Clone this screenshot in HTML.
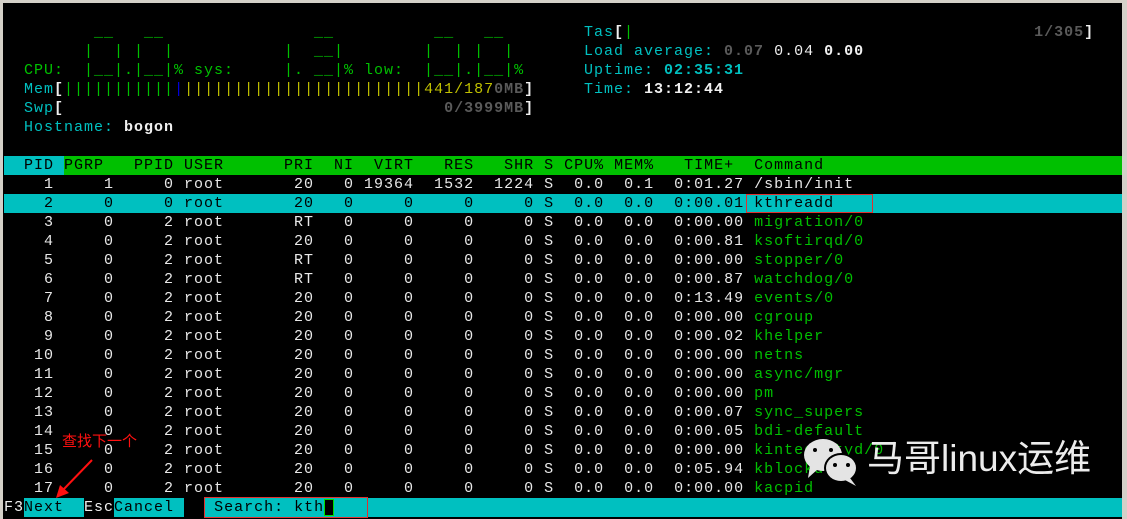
<!DOCTYPE html>
<html><head><meta charset="utf-8">
<style>
html,body{margin:0;padding:0;}
body{width:1127px;height:519px;background:#d4d0c8;position:relative;overflow:hidden;}
#term{position:absolute;left:3px;top:3px;width:1119px;height:516px;background:#000;}
.l{position:absolute;left:4px;height:19px;line-height:19px;white-space:pre;font-family:"Liberation Mono",monospace;font-size:15px;letter-spacing:1px;color:#e8e8e8;}
.g{color:#00c000}.c{color:#00c0c0}.w{color:#f0f0f0}.b{font-weight:bold}.gr{color:#5a5a5a;font-weight:bold}
.y{color:#c0c000}.bl{color:#0000e0}.k{color:#000}
.bar{position:absolute;height:19px;}
</style></head><body>
<div id="term"></div>
<div class="l g" style="top:23px">         __   __               __          __   __</div>
<div class="l g" style="top:42px">        |  | |  |           |  __|        |  | |  |</div>
<div class="l g" style="top:61px">  CPU:  |__|.|__|% sys:     |. __|% low:  |__|.|__|%</div>
<div class="l" style="top:80px">  <span class="c">Mem</span><span class="w b">[</span><span class="g">|||||||||||</span><span class="bl">|</span><span class="y">||||||||||||||||||||||||441/187</span><span class="gr">0MB</span><span class="w b">]</span></div>
<div class="l" style="top:99px">  <span class="c">Swp</span><span class="w b">[</span>                                      <span class="gr">0/3999MB</span><span class="w b">]</span></div>
<div class="l" style="top:118px">  <span class="c">Hostname:</span> <span class="w b">bogon</span></div>
<div class="l" style="top:23px;left:584px"><span class="c">Tas</span><span class="w b">[</span><span class="g">|</span>                                        <span class="gr">1/305</span><span class="w b">]</span></div>
<div class="l" style="top:42px;left:584px"><span class="c">Load average: </span><span class="gr">0.07</span> <span class="w">0.04</span> <span class="w b">0.00</span></div>
<div class="l" style="top:61px;left:584px"><span class="c">Uptime: </span><span class="c b">02:35:31</span></div>
<div class="l" style="top:80px;left:584px"><span class="c">Time: </span><span class="w b">13:12:44</span></div>
<div class="bar" style="top:156px;left:4px;width:1118px;background:#00c000"></div>
<div class="bar" style="top:156px;left:4px;width:60px;background:#00c0c0"></div>
<div class="l k" style="top:156px">  PID PGRP   PPID USER      PRI  NI  VIRT   RES   SHR S CPU% MEM%   TIME+  Command</div>
<div class="l" style="top:175px">    1     1     0 root       20   0 19364  1532  1224 S  0.0  0.1  0:01.27 /sbin/init</div>
<div class="bar" style="top:194px;left:4px;width:1118px;background:#00c0c0"></div>
<div class="l k" style="top:194px">    2     0     0 root       20   0     0     0     0 S  0.0  0.0  0:00.01 kthreadd</div>
<div style="position:absolute;left:746px;top:194px;width:125px;height:17px;border:1px solid #e03030"></div>
<div class="l" style="top:213px">    3     0     2 root       RT   0     0     0     0 S  0.0  0.0  0:00.00 <span class="g">migration/0</span></div>
<div class="l" style="top:232px">    4     0     2 root       20   0     0     0     0 S  0.0  0.0  0:00.81 <span class="g">ksoftirqd/0</span></div>
<div class="l" style="top:251px">    5     0     2 root       RT   0     0     0     0 S  0.0  0.0  0:00.00 <span class="g">stopper/0</span></div>
<div class="l" style="top:270px">    6     0     2 root       RT   0     0     0     0 S  0.0  0.0  0:00.87 <span class="g">watchdog/0</span></div>
<div class="l" style="top:289px">    7     0     2 root       20   0     0     0     0 S  0.0  0.0  0:13.49 <span class="g">events/0</span></div>
<div class="l" style="top:308px">    8     0     2 root       20   0     0     0     0 S  0.0  0.0  0:00.00 <span class="g">cgroup</span></div>
<div class="l" style="top:327px">    9     0     2 root       20   0     0     0     0 S  0.0  0.0  0:00.02 <span class="g">khelper</span></div>
<div class="l" style="top:346px">   10     0     2 root       20   0     0     0     0 S  0.0  0.0  0:00.00 <span class="g">netns</span></div>
<div class="l" style="top:365px">   11     0     2 root       20   0     0     0     0 S  0.0  0.0  0:00.00 <span class="g">async/mgr</span></div>
<div class="l" style="top:384px">   12     0     2 root       20   0     0     0     0 S  0.0  0.0  0:00.00 <span class="g">pm</span></div>
<div class="l" style="top:403px">   13     0     2 root       20   0     0     0     0 S  0.0  0.0  0:00.07 <span class="g">sync_supers</span></div>
<div class="l" style="top:422px">   14     0     2 root       20   0     0     0     0 S  0.0  0.0  0:00.05 <span class="g">bdi-default</span></div>
<div class="l" style="top:441px">   15     0     2 root       20   0     0     0     0 S  0.0  0.0  0:00.00 <span class="g">kintegrityd/0</span></div>
<div class="l" style="top:460px">   16     0     2 root       20   0     0     0     0 S  0.0  0.0  0:05.94 <span class="g">kblockd/0</span></div>
<div class="l" style="top:479px">   17     0     2 root       20   0     0     0     0 S  0.0  0.0  0:00.00 <span class="g">kacpid</span></div>
<div class="bar" style="top:498px;left:24px;width:60px;background:#00c0c0"></div>
<div class="bar" style="top:498px;left:114px;width:70px;background:#00c0c0"></div>
<div class="bar" style="top:498px;left:204px;width:918px;background:#00c0c0"></div>
<div style="position:absolute;left:324px;top:499px;width:8px;height:15px;background:#000;border:1px solid #00e000"></div>
<div class="l" style="top:498px"><span class="w">F3</span><span class="k">Next  </span><span class="w">Esc</span><span class="k">Cancel </span>   <span class="k">Search: kth</span></div>
<div style="position:absolute;left:204px;top:497px;width:162px;height:19px;border:1px solid #e03030"></div>
<div style="position:absolute;left:62px;top:432px;font-family:'Liberation Sans','Noto Sans CJK SC',sans-serif;font-size:15px;color:#ff1010;line-height:20px;">查找下一个</div>
<svg style="position:absolute;left:0;top:0" width="1127" height="519">
<line x1="92" y1="460" x2="62" y2="491" stroke="#ff1010" stroke-width="2"/>
<polygon points="56,498 60,485 69,493" fill="#ff1010"/>
<ellipse cx="823" cy="455" rx="19" ry="16" fill="#e4e4e4"/>
<polygon points="810,466 808,478 818,469" fill="#e4e4e4"/>
<ellipse cx="841" cy="468" rx="17" ry="15" fill="#000"/>
<ellipse cx="841" cy="468" rx="15" ry="13" fill="#e4e4e4"/>
<polygon points="850,478 856,486 845,480" fill="#e4e4e4"/>
<circle cx="815" cy="450" r="2" fill="#000"/><circle cx="831" cy="450" r="2" fill="#000"/>
<circle cx="835" cy="465" r="2" fill="#000"/><circle cx="848" cy="465" r="2" fill="#000"/>
</svg>
<div style="position:absolute;left:867px;top:437px;font-family:'Liberation Sans','Noto Sans CJK SC',sans-serif;font-size:37px;line-height:44px;color:#ececec;white-space:nowrap;">马哥linux运维</div>
</body></html>
